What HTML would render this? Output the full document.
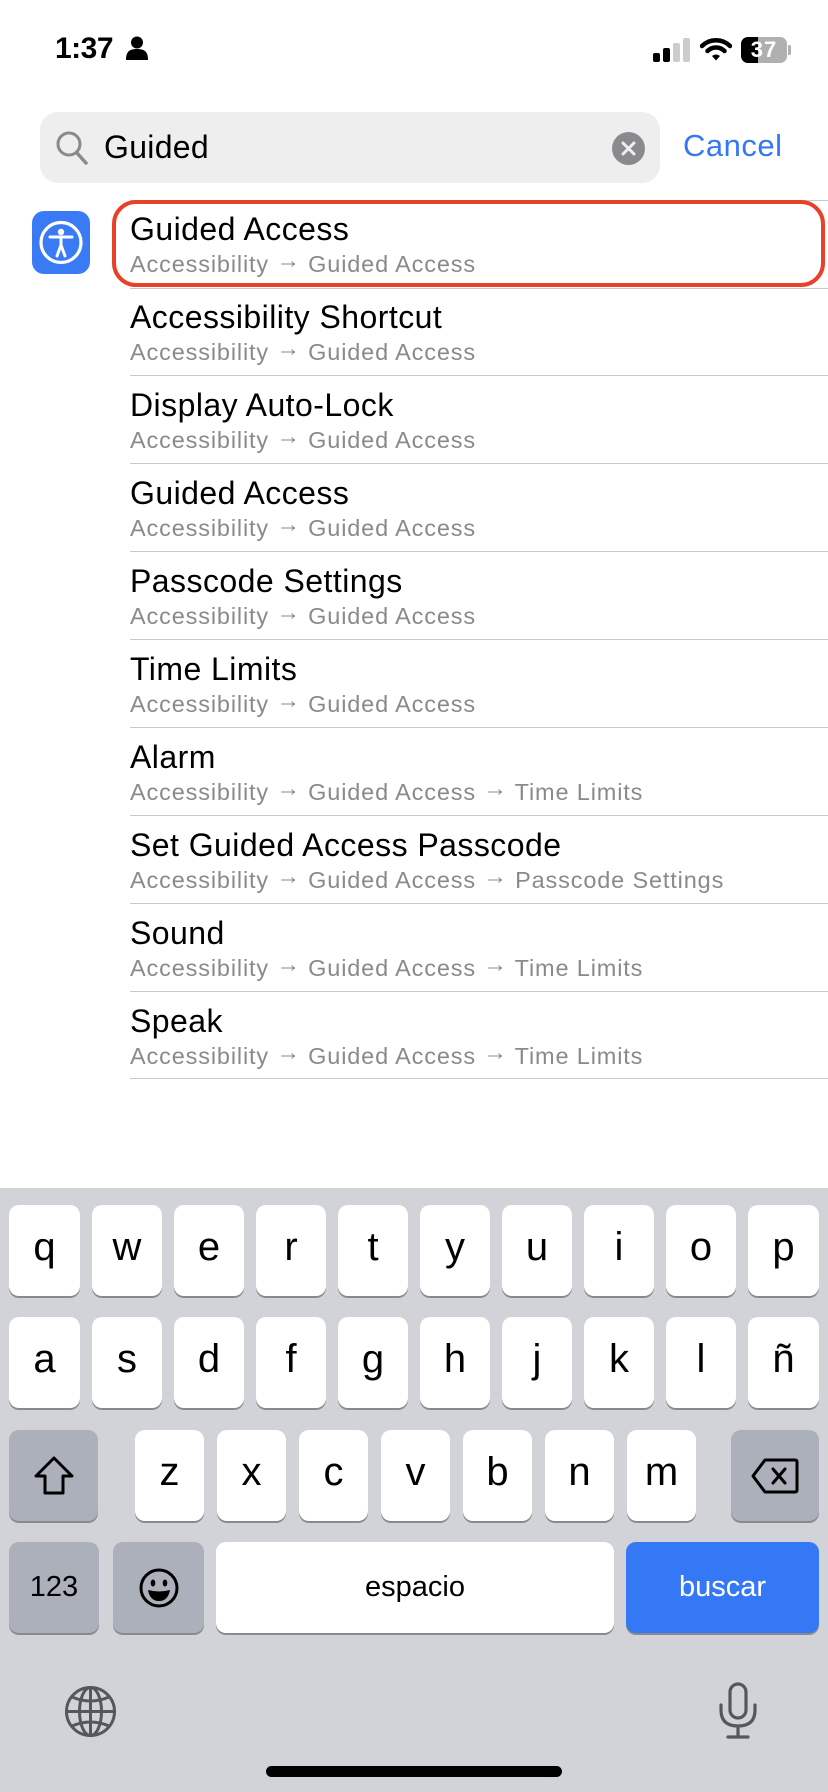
<!DOCTYPE html>
<html><head><meta charset="utf-8">
<style>
*{margin:0;padding:0;box-sizing:border-box}
body{width:828px;height:1792px;background:#fff;position:relative;overflow:hidden;font-family:"Liberation Sans",sans-serif;color:#000}
.abs{position:absolute}
.time{left:55px;top:32px;font-size:30px;font-weight:bold;letter-spacing:-0.5px}
.search{left:40px;top:112px;width:620px;height:71px;background:#eeeeef;border-radius:18px}
.search .txt{position:absolute;left:64px;top:17px;font-size:32px;letter-spacing:0.3px}
.cancel{left:683px;top:128px;font-size:31px;color:#3478f6;letter-spacing:0.5px}
.icon{left:32px;top:211px;width:58px;height:63px;background:#3a7bf5;border-radius:12px}
.row{position:absolute;left:130px;width:698px;height:88px}
.row .t{position:absolute;left:0;top:11px;font-size:32px;letter-spacing:0.45px;white-space:nowrap}
.row .s{position:absolute;left:0;top:51px;font-size:23.5px;letter-spacing:0.85px;color:#8a8a8e;white-space:nowrap}
.row .s i{font-style:normal;position:relative;top:-4px}
.sep{position:absolute;left:130px;right:0;height:1px;background:#c8c8cc}
.red{left:112px;top:200px;width:713px;height:87px;border:4px solid #e8402a;border-radius:24px}
.kb{left:0;top:1188px;width:828px;height:604px;background:#d1d3d9}
.key{position:absolute;height:91px;background:#fff;border-radius:10px;box-shadow:0 2px 0 #898a8d;display:flex;align-items:center;justify-content:center;font-size:40px;padding-bottom:6px}
.dk{background:#abb0bb}
</style></head><body>
<div class="abs time">1:37</div>
<svg class="abs" style="left:126px;top:36px" width="22" height="24" viewBox="0 0 22 24"><circle cx="11" cy="6.5" r="6" fill="#000"/><path d="M0 24 C0 15 4 13 11 13 C18 13 22 15 22 24Z" fill="#000"/></svg>
<svg class="abs" style="left:653px;top:38px" width="38" height="24" viewBox="0 0 38 24"><rect x="0" y="15" width="7" height="9" rx="2" fill="#000"/><rect x="10" y="10" width="7" height="14" rx="2" fill="#000"/><rect x="20" y="5" width="7" height="19" rx="2" fill="#ccc"/><rect x="30" y="0" width="7" height="24" rx="2" fill="#ccc"/></svg>
<svg class="abs" style="left:700px;top:37px" width="32" height="24" viewBox="0 0 32 24"><path d="M2 9 A20 20 0 0 1 30 9" stroke="#000" stroke-width="4.5" fill="none" stroke-linecap="round"/><path d="M7.5 14 A12 12 0 0 1 24.5 14" stroke="#000" stroke-width="4.5" fill="none" stroke-linecap="round"/><path d="M12 19 L16 23.5 L20 19 A6 6 0 0 0 12 19Z" fill="#000"/></svg>
<div class="abs" style="left:741px;top:37px;width:46px;height:26px;border-radius:7px;background:linear-gradient(90deg,#000 0 37%,#b0b0b0 37%);color:#fff;font-weight:bold;font-size:22px;text-align:center;line-height:26px;letter-spacing:1px">37</div>
<div class="abs" style="left:788px;top:45px;width:3px;height:10px;border-radius:0 2px 2px 0;background:#b0b0b0"></div>

<div class="abs search"><svg style="position:absolute;left:15px;top:18px" width="34" height="36" viewBox="0 0 34 36"><circle cx="14" cy="14" r="11" stroke="#8a8a8e" stroke-width="3" fill="none"/><path d="M22 23 L31 33" stroke="#8a8a8e" stroke-width="3.5" stroke-linecap="round"/></svg><div class="txt">Guided</div>
<svg style="position:absolute;left:572px;top:20px" width="33" height="33" viewBox="0 0 33 33"><circle cx="16.5" cy="16.5" r="16.5" fill="#8a8a8e"/><path d="M11 11 L22 22 M22 11 L11 22" stroke="#eee" stroke-width="3" stroke-linecap="round"/></svg></div>
<div class="abs cancel">Cancel</div>

<div class="abs icon"><svg width="58" height="63" viewBox="0 0 58 63"><circle cx="29" cy="31.5" r="20" stroke="#fff" stroke-width="3.2" fill="none"/><circle cx="29" cy="21" r="3.2" fill="#fff"/><path d="M18 26 L40 26 M29 26 L29 35 M29 34 L25 45 M29 34 L33 45" stroke="#fff" stroke-width="3" stroke-linecap="round" fill="none"/></svg></div>

<div class="sep" style="top:200px"></div>
<div class="row" style="top:200px"><div class="t">Guided Access</div><div class="s">Accessibility <i>→</i> Guided Access</div></div>
<div class="sep" style="top:288px"></div>
<div class="row" style="top:288px"><div class="t">Accessibility Shortcut</div><div class="s">Accessibility <i>→</i> Guided Access</div></div>
<div class="sep" style="top:375px"></div>
<div class="row" style="top:376px"><div class="t">Display Auto-Lock</div><div class="s">Accessibility <i>→</i> Guided Access</div></div>
<div class="sep" style="top:463px"></div>
<div class="row" style="top:464px"><div class="t">Guided Access</div><div class="s">Accessibility <i>→</i> Guided Access</div></div>
<div class="sep" style="top:551px"></div>
<div class="row" style="top:552px"><div class="t">Passcode Settings</div><div class="s">Accessibility <i>→</i> Guided Access</div></div>
<div class="sep" style="top:639px"></div>
<div class="row" style="top:640px"><div class="t">Time Limits</div><div class="s">Accessibility <i>→</i> Guided Access</div></div>
<div class="sep" style="top:727px"></div>
<div class="row" style="top:728px"><div class="t">Alarm</div><div class="s">Accessibility <i>→</i> Guided Access <i>→</i> Time Limits</div></div>
<div class="sep" style="top:815px"></div>
<div class="row" style="top:816px"><div class="t">Set Guided Access Passcode</div><div class="s">Accessibility <i>→</i> Guided Access <i>→</i> Passcode Settings</div></div>
<div class="sep" style="top:903px"></div>
<div class="row" style="top:904px"><div class="t">Sound</div><div class="s">Accessibility <i>→</i> Guided Access <i>→</i> Time Limits</div></div>
<div class="sep" style="top:991px"></div>
<div class="row" style="top:992px"><div class="t">Speak</div><div class="s">Accessibility <i>→</i> Guided Access <i>→</i> Time Limits</div></div>
<div class="sep" style="top:1078px"></div>
<div class="abs red"></div>

<div class="abs kb">
<div class="key" style="left:9px;top:17px;width:71px">q</div>
<div class="key" style="left:92px;top:17px;width:70px">w</div>
<div class="key" style="left:174px;top:17px;width:70px">e</div>
<div class="key" style="left:256px;top:17px;width:70px">r</div>
<div class="key" style="left:338px;top:17px;width:70px">t</div>
<div class="key" style="left:420px;top:17px;width:70px">y</div>
<div class="key" style="left:502px;top:17px;width:70px">u</div>
<div class="key" style="left:584px;top:17px;width:70px">i</div>
<div class="key" style="left:666px;top:17px;width:70px">o</div>
<div class="key" style="left:748px;top:17px;width:71px">p</div>

<div class="key" style="left:9px;top:129px;width:71px">a</div>
<div class="key" style="left:92px;top:129px;width:70px">s</div>
<div class="key" style="left:174px;top:129px;width:70px">d</div>
<div class="key" style="left:256px;top:129px;width:70px">f</div>
<div class="key" style="left:338px;top:129px;width:70px">g</div>
<div class="key" style="left:420px;top:129px;width:70px">h</div>
<div class="key" style="left:502px;top:129px;width:70px">j</div>
<div class="key" style="left:584px;top:129px;width:70px">k</div>
<div class="key" style="left:666px;top:129px;width:70px">l</div>
<div class="key" style="left:748px;top:129px;width:71px">ñ</div>

<div class="key dk" style="left:9px;top:242px;width:89px;padding:0"><svg width="44" height="44" viewBox="0 0 44 44"><path d="M22 4 L40 22 L31 22 L31 39 L13 39 L13 22 L4 22 Z" stroke="#000" stroke-width="3" fill="none" stroke-linejoin="round"/></svg></div>
<div class="key" style="left:135px;top:242px;width:69px">z</div>
<div class="key" style="left:217px;top:242px;width:69px">x</div>
<div class="key" style="left:299px;top:242px;width:69px">c</div>
<div class="key" style="left:381px;top:242px;width:69px">v</div>
<div class="key" style="left:463px;top:242px;width:69px">b</div>
<div class="key" style="left:545px;top:242px;width:69px">n</div>
<div class="key" style="left:627px;top:242px;width:69px">m</div>
<div class="key dk" style="left:731px;top:242px;width:88px;padding:0"><svg width="48" height="36" viewBox="0 0 48 36"><path d="M14 2 L44 2 Q46 2 46 4 L46 32 Q46 34 44 34 L14 34 L2 18 Z" stroke="#000" stroke-width="3" fill="none" stroke-linejoin="round"/><path d="M22 11 L34 25 M34 11 L22 25" stroke="#000" stroke-width="3" stroke-linecap="round"/></svg></div>

<div class="key dk" style="left:9px;top:354px;width:90px;font-size:29px;padding:0">123</div>
<div class="key dk" style="left:113px;top:354px;width:91px;padding:0"><svg width="42" height="42" viewBox="0 0 42 42"><circle cx="21" cy="21" r="18" stroke="#000" stroke-width="3" fill="none"/><ellipse cx="15" cy="16" rx="2.3" ry="3.5"/><ellipse cx="27" cy="16" rx="2.3" ry="3.5"/><path d="M10 23 Q21 26 32 23 Q30 34 21 34 Q12 34 10 23Z"/></svg></div>
<div class="key" style="left:216px;top:354px;width:398px;font-size:29px;padding:0">espacio</div>
<div class="key" style="left:626px;top:354px;width:193px;background:#3478f6;color:#fff;font-size:29px;padding:0">buscar</div>

<svg class="abs" style="left:64px;top:497px" width="53" height="53" viewBox="0 0 53 53"><g stroke="#55575c" stroke-width="3" fill="none"><circle cx="26.5" cy="26.5" r="24"/><ellipse cx="26.5" cy="26.5" rx="11" ry="24"/><path d="M26.5 2.5 L26.5 50.5 M2.5 26.5 L50.5 26.5 M8 12 Q26.5 20 45 12 M8 41 Q26.5 33 45 41"/></g></svg>
<svg class="abs" style="left:718px;top:494px" width="40" height="58" viewBox="0 0 40 58"><g stroke="#55575c" stroke-width="3.2" fill="none" stroke-linecap="round"><rect x="12" y="2" width="16" height="34" rx="8"/><path d="M3 23 L3 28 Q3 44 20 44 Q37 44 37 28 L37 23 M20 44 L20 54 M10 55 L30 55"/></g></svg>
<div class="abs" style="left:266px;top:578px;width:296px;height:11px;border-radius:6px;background:#000"></div>
</div>
</body></html>
